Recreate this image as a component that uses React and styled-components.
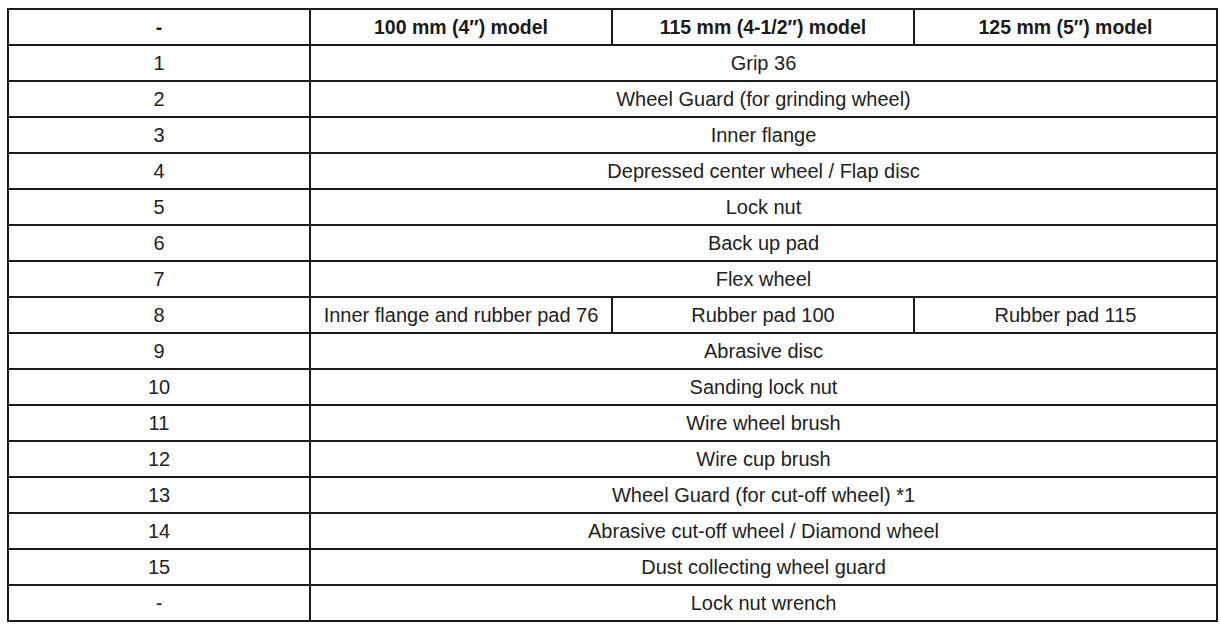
import React from "react";
import styled, { createGlobalStyle } from "styled-components";

const GlobalStyle = createGlobalStyle`
  body {
    margin: 0;
    background: #fff;
    font-family: "Liberation Sans", Arial, sans-serif;
  }
`;

const rows = [
  ["1", "Grip 36"],
  ["2", "Wheel Guard (for grinding wheel)"],
  ["3", "Inner flange"],
  ["4", "Depressed center wheel / Flap disc"],
  ["5", "Lock nut"],
  ["6", "Back up pad"],
  ["7", "Flex wheel"],
  ["8", ["Inner flange and rubber pad 76", "Rubber pad 100", "Rubber pad 115"]],
  ["9", "Abrasive disc"],
  ["10", "Sanding lock nut"],
  ["11", "Wire wheel brush"],
  ["12", "Wire cup brush"],
  ["13", "Wheel Guard (for cut-off wheel) *1"],
  ["14", "Abrasive cut-off wheel / Diamond wheel"],
  ["15", "Dust collecting wheel guard"],
  ["-", "Lock nut wrench"],
];

const App = () => {
  return (
    <>
      <GlobalStyle />
      <Page>
        <PartsTable>
          <colgroup>
            <col style={{ width: 302 }} />
            <col style={{ width: 302 }} />
            <col style={{ width: 302 }} />
            <col style={{ width: 303 }} />
          </colgroup>
          <thead>
            <tr>
              <HeadCell>-</HeadCell>
              <HeadCell>100 mm (4″) model</HeadCell>
              <HeadCell>115 mm (4-1/2″) model</HeadCell>
              <HeadCell>125 mm (5″) model</HeadCell>
            </tr>
          </thead>
          <tbody>
            {rows.map(([no, item]) => (
              <tr key={no + item}>
                <Cell>{no}</Cell>
                {Array.isArray(item) ? (
                  item.map((text) => <Cell key={text}>{text}</Cell>)
                ) : (
                  <Cell colSpan={3}>{item}</Cell>
                )}
              </tr>
            ))}
          </tbody>
        </PartsTable>
      </Page>
    </>
  );
};

const Page = styled.div`
  padding: 8px 0 0 7px;
`;

const PartsTable = styled.table`
  border-collapse: collapse;
  table-layout: fixed;
  width: 1209px;
  border: 2px solid #1b1b1b;
`;

const Cell = styled.td`
  height: 33px;
  padding: 1px 0 0;
  border: 2px solid #1b1b1b;
  text-align: center;
  vertical-align: middle;
  font-size: 20px;
  color: #222;
  white-space: nowrap;
`;

const HeadCell = styled(Cell).attrs({ as: "th" })`
  font-weight: bold;
  font-size: 19.5px;
  color: #1a1a1a;
`;

export default App;
